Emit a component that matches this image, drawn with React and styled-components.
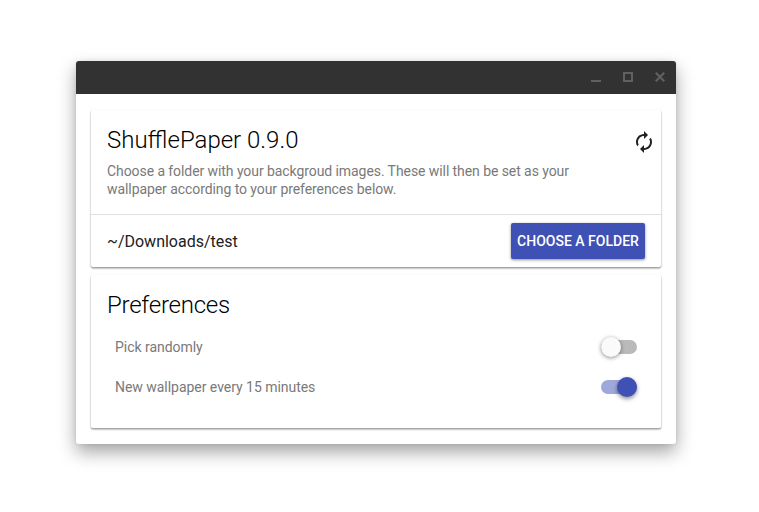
import React, { useState } from "react";
import styled, { createGlobalStyle } from "styled-components";

const GlobalStyle = createGlobalStyle`
  * { box-sizing: border-box; }
  body {
    margin: 0;
    background: #fff;
    font-family: Roboto, "Liberation Sans", sans-serif;
    overflow: hidden;
  }
`;

const Desktop = styled.main`
  height: 512px;
  padding: 61px 83px 0 76px;
`;

const AppWindow = styled.section`
  width: 600px;
  height: 383px;
  background: #fff;
  border-radius: 3px;
  box-shadow: 0 8px 18px rgba(0, 0, 0, 0.36), 0 0 4px rgba(0, 0, 0, 0.08);
  overflow: hidden;
`;

const TitleBar = styled.header`
  height: 33px;
  padding: 0 11px 1px 0;
  display: flex;
  align-items: center;
  justify-content: flex-end;
  gap: 22px;
  background: #323232;
`;

const WindowControl = styled.button`
  width: 10px;
  height: 10px;
  padding: 0;
  border: 0;
  background: none;
  color: #606060;

  svg { display: block; }
`;

const Content = styled.div`
  padding: 16px 15px;
  display: flex;
  flex-direction: column;
  gap: 8px;
`;

const Card = styled.article`
  height: ${(p) => p.$height}px;
  border-radius: 2px;
  background: #fff;
  box-shadow: 0 2px 2px rgba(0, 0, 0, 0.14), 0 1px 2px rgba(0, 0, 0, 0.34);
`;

const CardIntro = styled.div`
  height: 105px;
  padding: 16px 5px 0 16px;
  display: flex;
  justify-content: space-between;
  border-bottom: 1px solid #e0e0e0;
`;

const Heading = styled.h1`
  margin: 0;
  color: #000;
  font-size: 24px;
  font-weight: 300;
  line-height: 28px;
  letter-spacing: ${(p) => p.$tracking || "normal"};
`;

const Description = styled.p`
  width: 480px;
  margin: 8px 0 0;
  color: #797979;
  font-size: 14px;
  line-height: 18px;
  letter-spacing: -0.075px;
`;

const RefreshButton = styled.button`
  width: 24px;
  height: 24px;
  margin-top: 4px;
  padding: 0;
  border: 0;
  background: none;
  color: #212121;

  svg { display: block; }
`;

const FolderRow = styled.div`
  height: 52px;
  padding: 0 16px;
  display: flex;
  align-items: center;
  justify-content: space-between;
  color: #212121;
  font-size: 16px;
`;

const FolderButton = styled.button`
  width: 134px;
  height: 36px;
  padding: 0;
  border: 0;
  border-radius: 2px;
  background: #3f51b5;
  color: #fff;
  font: 500 14px Roboto, sans-serif;
  text-transform: uppercase;
  white-space: nowrap;
  box-shadow: 0 1px 3px rgba(0, 0, 0, 0.45);
`;

const Preferences = styled.div`
  padding: 16px 16px 0;
`;

const PreferenceRow = styled.label`
  height: 40px;
  padding: 0 8px;
  display: flex;
  align-items: center;
  justify-content: space-between;
  color: #797979;
  font-size: 14px;
  letter-spacing: -0.035px;
`;

const PreferenceList = styled.div`
  padding-top: 8px;
`;

const Switch = styled.button`
  width: 36px;
  height: 14px;
  padding: 0;
  display: flex;
  align-items: center;
  justify-content: ${(p) => (p.$on ? "flex-end" : "flex-start")};
  border: 0;
  border-radius: 7px;
  background: ${(p) => (p.$on ? "#9fa8da" : "#bababa")};
`;

const Thumb = styled.span`
  flex: none;
  width: 20px;
  height: 20px;
  border-radius: 50%;
  background: ${(p) => (p.$on ? "#3f51b5" : "#fafafa")};
  box-shadow: 0 ${(p) => (p.$on ? 2 : 1)}px 4px rgba(0, 0, 0, 0.45);
`;

function Toggle({ initial, label }) {
  const [on, setOn] = useState(initial);
  return (
    <Switch $on={on} role="switch" aria-checked={on} aria-label={label} onClick={() => setOn(!on)}>
      <Thumb $on={on} />
    </Switch>
  );
}

const preferences = [
  { label: "Pick randomly", on: false },
  { label: "New wallpaper every 15 minutes", on: true },
];

export default function App() {
  return (
    <>
      <GlobalStyle />
      <Desktop>
        <AppWindow>
          <TitleBar>
            <WindowControl aria-label="Minimize">
              <svg width="10" height="10"><path d="M0 8h10v2H0z" fill="currentColor" /></svg>
            </WindowControl>
            <WindowControl aria-label="Maximize">
              <svg width="10" height="10"><path d="M1 1h8v8H1z" fill="none" stroke="currentColor" strokeWidth="2" /></svg>
            </WindowControl>
            <WindowControl aria-label="Close">
              <svg width="10" height="10"><path d="M.8.8l8.4 8.4M9.2.8L.8 9.2" stroke="currentColor" strokeWidth="2.2" /></svg>
            </WindowControl>
          </TitleBar>
          <Content>
            <Card $height={157}>
              <CardIntro>
                <div>
                  <Heading>ShufflePaper 0.9.0</Heading>
                  <Description>
                    Choose a folder with your backgroud images. These will then be set as your wallpaper according to your preferences below.
                  </Description>
                </div>
                <RefreshButton aria-label="Refresh">
                  <svg width="24" height="24" viewBox="0 0 24 24" fill="currentColor">
                    <path d="M12 6v3l4-4-4-4v3c-4.42 0-8 3.58-8 8 0 1.57.46 3.03 1.24 4.26L6.7 14.8c-.45-.83-.7-1.79-.7-2.8 0-3.31 2.69-6 6-6zm6.76 1.74L17.3 9.2c.44.84.7 1.79.7 2.8 0 3.31-2.69 6-6 6v-3l-4 4 4 4v-3c4.42 0 8-3.58 8-8 0-1.57-.46-3.03-1.24-4.26z" />
                  </svg>
                </RefreshButton>
              </CardIntro>
              <FolderRow>
                <span>~/Downloads/test</span>
                <FolderButton>Choose a folder</FolderButton>
              </FolderRow>
            </Card>
            <Card $height={153}>
              <Preferences>
                <Heading as="h2" $tracking="-0.24px">Preferences</Heading>
                <PreferenceList>
                  {preferences.map((item) => (
                    <PreferenceRow key={item.label}>
                      <span>{item.label}</span>
                      <Toggle initial={item.on} label={item.label} />
                    </PreferenceRow>
                  ))}
                </PreferenceList>
              </Preferences>
            </Card>
          </Content>
        </AppWindow>
      </Desktop>
    </>
  );
}
